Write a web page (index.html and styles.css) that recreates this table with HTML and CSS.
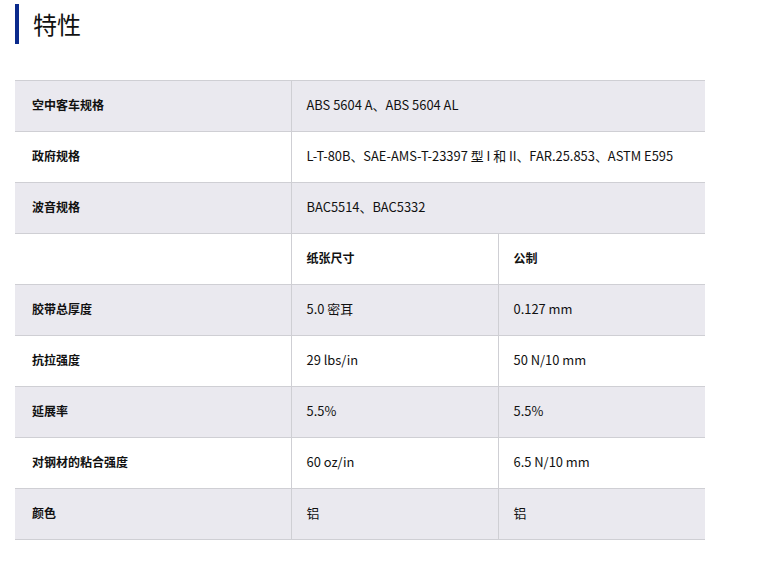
FILE: index.html
```html
<!DOCTYPE html>
<html lang="zh">
<head>
<meta charset="utf-8">
<link rel="stylesheet" href="styles.css">
</head>
<body>
<div class="page">
  <h2 class="title">特性</h2>
  <table class="spec">
    <colgroup><col class="c1"><col class="c2"><col class="c3"></colgroup>
    <tr class="alt"><th>空中客车规格</th><td colspan="2">ABS 5604 A、ABS 5604 AL</td></tr>
    <tr><th>政府规格</th><td colspan="2">L-T-80B、SAE-AMS-T-23397 型 I 和 II、FAR.25.853、ASTM E595</td></tr>
    <tr class="alt"><th>波音规格</th><td colspan="2">BAC5514、BAC5332</td></tr>
    <tr><th></th><th class="hd">纸张尺寸</th><th class="hd">公制</th></tr>
    <tr class="alt"><th>胶带总厚度</th><td>5.0 密耳</td><td>0.127 mm</td></tr>
    <tr><th>抗拉强度</th><td>29 lbs/in</td><td>50 N/10 mm</td></tr>
    <tr class="alt"><th>延展率</th><td>5.5%</td><td>5.5%</td></tr>
    <tr><th>对钢材的粘合强度</th><td>60 oz/in</td><td>6.5 N/10 mm</td></tr>
    <tr class="alt"><th>颜色</th><td>铝</td><td>铝</td></tr>
  </table>
</div>
</body>
</html>
```
FILE: styles.css
```css
html, body { margin: 0; padding: 0; background: #fff; }
body { font-family: "Noto Sans CJK SC", "Noto Sans", sans-serif; color: #111; }
.page { padding: 4px 0 0 15px; width: 690px; }
.title {
  margin: 0;
  height: 40px;
  line-height: 40px;
  border-left: 4px solid #0a2a8c;
  padding-left: 14px;
  font-size: 24px;
  font-weight: normal;
  color: #111;
}
.spec {
  margin-top: 36px;
  width: 690px;
  border-collapse: collapse;
  table-layout: fixed;
  font-size: 12px;
}
.c1 { width: 276px; }
.c2 { width: 207px; }
.c3 { width: 207px; }
.spec tr { height: 51px; }
.spec th, .spec td {
  border-top: 1px solid #cfcfd4;
  border-bottom: 1px solid #cfcfd4;
  border-right: 1px solid #cfcfd4;
  text-align: left;
  padding: 0 0 3px 15px;
  vertical-align: middle;
}
.spec td { font-size: 12.9px; }
.spec th { font-weight: bold; padding-left: 17px; }
.spec td:last-child, .spec th:last-child { border-right: none; }
.spec .hd { padding-left: 15px; }
.spec tr.alt { background: #eae9ef; }
```
